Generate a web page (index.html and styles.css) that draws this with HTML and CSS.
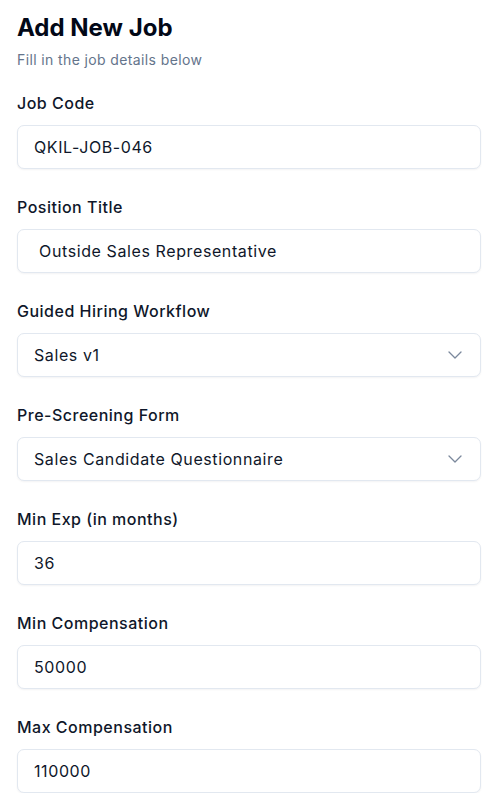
FILE: index.html
```html
<!DOCTYPE html>
<html lang="en">
<head>
<meta charset="utf-8">
<title>Add New Job</title>
<link rel="stylesheet" href="styles.css">
</head>
<body>
<main class="page">
  <header class="head">
    <h1 class="title">Add New Job</h1>
    <p class="subtitle">Fill in the job details below</p>
  </header>
  <form class="form">
    <div class="field">
      <label class="label" for="code">Job Code</label>
      <input class="control" id="code" type="text" value="QKIL-JOB-046">
    </div>
    <div class="field">
      <label class="label" for="title">Position Title</label>
      <input class="control" id="title" type="text" value=" Outside Sales Representative">
    </div>
    <div class="field">
      <span class="label">Guided Hiring Workflow</span>
      <div class="control select">
        <span>Sales v1</span>
        <svg class="chev" width="14" height="8" viewBox="0 0 14 8"><polyline points="1,1 7,7 13,1" fill="none" stroke="currentColor" stroke-width="1.3" stroke-linecap="round" stroke-linejoin="round"/></svg>
      </div>
    </div>
    <div class="field">
      <span class="label">Pre-Screening Form</span>
      <div class="control select">
        <span>Sales Candidate Questionnaire</span>
        <svg class="chev" width="14" height="8" viewBox="0 0 14 8"><polyline points="1,1 7,7 13,1" fill="none" stroke="currentColor" stroke-width="1.3" stroke-linecap="round" stroke-linejoin="round"/></svg>
      </div>
    </div>
    <div class="field">
      <label class="label" for="exp">Min Exp (in months)</label>
      <input class="control" id="exp" type="text" value="36">
    </div>
    <div class="field">
      <label class="label" for="minc">Min Compensation</label>
      <input class="control" id="minc" type="text" value="50000">
    </div>
    <div class="field">
      <label class="label" for="maxc">Max Compensation</label>
      <input class="control" id="maxc" type="text" value="110000">
    </div>
  </form>
</main>
</body>
</html>
```
FILE: styles.css
```css
* { box-sizing: border-box; }
html, body { margin: 0; padding: 0; background: #ffffff; }
body {
  font-family: Inter, "Noto Sans", "Liberation Sans", sans-serif;
  color: #0f172a;
}
.page {
  padding: 12px 16px 0 17px;
}
.head { margin-bottom: 21px; }
.title {
  margin: 0;
  font-size: 24px;
  line-height: 32px;
  font-weight: 700;
  color: #020817;
  letter-spacing: 0;
}
.subtitle {
  margin: 6px 0 0;
  font-size: 14px;
  line-height: 20px;
  color: #64748b;
  letter-spacing: 0.38px;
}
.form {
  display: flex;
  flex-direction: column;
  gap: 26px;
}
.field {
  display: flex;
  flex-direction: column;
  gap: 10px;
}
.label {
  font-size: 16px;
  line-height: 24px;
  font-weight: 500;
  color: #0f172a;
  letter-spacing: 0.5px;
}
.control {
  display: block;
  width: 100%;
  height: 44px;
  margin: 0;
  padding: 0 16px;
  border: 1px solid #e2e8f0;
  border-radius: 7px;
  background: #ffffff;
  box-shadow: 0 1px 2px rgba(15, 23, 42, 0.05);
  font-family: inherit;
  font-size: 16px;
  color: #0f172a;
  letter-spacing: 0.6px;
  outline: none;
}
.select {
  display: flex;
  align-items: center;
  justify-content: space-between;
  padding-right: 18px;
}
.chev {
  color: #64748b;
  opacity: 0.85;
}
```
